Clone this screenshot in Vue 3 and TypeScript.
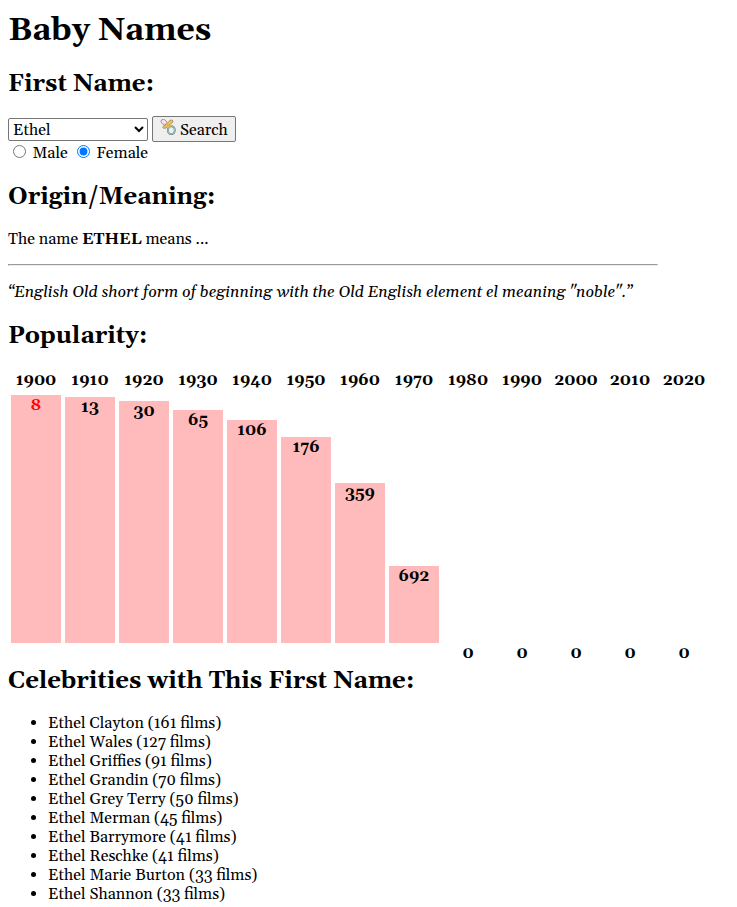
<script setup lang="ts">
import { ref } from 'vue'

interface Decade { year: number; rank: number }
interface Celebrity { name: string; films: number }

const selectedName = ref('Ethel')
const gender = ref('f')

const decades: Decade[] = [
  { year: 1900, rank: 8 },
  { year: 1910, rank: 13 },
  { year: 1920, rank: 30 },
  { year: 1930, rank: 65 },
  { year: 1940, rank: 106 },
  { year: 1950, rank: 176 },
  { year: 1960, rank: 359 },
  { year: 1970, rank: 692 },
  { year: 1980, rank: 0 },
  { year: 1990, rank: 0 },
  { year: 2000, rank: 0 },
  { year: 2010, rank: 0 },
  { year: 2020, rank: 0 },
]

const celebrities: Celebrity[] = [
  { name: 'Ethel Clayton', films: 161 },
  { name: 'Ethel Wales', films: 127 },
  { name: 'Ethel Griffies', films: 91 },
  { name: 'Ethel Grandin', films: 70 },
  { name: 'Ethel Grey Terry', films: 50 },
  { name: 'Ethel Merman', films: 45 },
  { name: 'Ethel Barrymore', films: 41 },
  { name: 'Ethel Reschke', films: 41 },
  { name: 'Ethel Marie Burton', films: 33 },
  { name: 'Ethel Shannon', films: 33 },
]

// A rank of 1 fills the chart; unranked decades have no bar.
const barHeight = (rank: number): number => (rank === 0 ? 0 : Math.floor((1000 - rank) / 4))
</script>

<template>
  <main class="page">
    <h1>Baby Names</h1>

    <h2>First Name:</h2>
    <div class="controls">
      <select v-model="selectedName" class="names">
        <option value="Ethel">Ethel</option>
      </select>
      <button class="search" type="button">
        <svg class="pacifier" viewBox="0 0 16 16" width="16" height="16">
          <ellipse cx="11.3" cy="11.2" rx="3.5" ry="4" fill="none" stroke="#648a80" stroke-width="1.9" />
          <ellipse cx="11.3" cy="11.2" rx="3.5" ry="4" fill="none" stroke="#a5d0dc" stroke-width="0.8" />
          <ellipse cx="3.9" cy="3" rx="3.1" ry="2.3" transform="rotate(40 3.9 3)" fill="#f6e6e8" stroke="#a5888c" stroke-width="0.9" />
          <path d="M11.4 1C13.2 1 13.4 3 12 4.1C10.5 5.2 9 5.6 8.1 6.9C7.1 8.5 5.4 9.6 3.7 9.2C2.3 8.8 2.6 7.4 4 6.9C5.6 6.3 6.2 5.6 7 4.6C8.2 3.4 9.4 1.2 11.4 1Z" fill="#edcb69" stroke="#9b7b38" stroke-width="0.8" />
          <path d="M7.2 5.2L9.6 7.6" stroke="#dcb552" stroke-width="3" stroke-linecap="round" />
        </svg>
        <span class="caption">Search</span>
      </button>
    </div>
    <div class="genders">
      <label><input v-model="gender" type="radio" name="gender" value="m" /><span class="caption">Male</span></label>
      <label><input v-model="gender" type="radio" name="gender" value="f" /><span class="caption">Female</span></label>
    </div>

    <h2>Origin/Meaning:</h2>
    <p>The name <strong>ETHEL</strong> means ...</p>
    <hr />
    <p class="meaning">“English Old short form of beginning with the Old English element el meaning "noble".”</p>

    <h2>Popularity:</h2>
    <div class="chart">
      <div v-for="d in decades" :key="d.year" class="decade">
        <div class="year">{{ d.year }}</div>
        <div class="track">
          <div class="bar" :class="{ top: d.rank > 0 && d.rank <= 10 }" :style="{ height: barHeight(d.rank) + 'px' }">{{ d.rank }}</div>
        </div>
      </div>
    </div>

    <h2 class="celebs">Celebrities with This First Name:</h2>
    <ul>
      <li v-for="c in celebrities" :key="c.name">{{ c.name }} ({{ c.films }} films)</li>
    </ul>
  </main>
</template>

<style>
body {
  background: #fff;
}
</style>

<style scoped>
.page {
  box-sizing: border-box;
  height: 907px;
  overflow: hidden;
  padding: 13px 8px 0;
  color: #000;
  font: 16px/18px Georgia, Gelasio, "Liberation Serif", serif;
}
h1 {
  margin: 0 0 22px;
  font-size: 32px;
  line-height: 36px;
}
h2 {
  margin: 0 0 18px;
  font-size: 24px;
  line-height: 27px;
}
.controls {
  display: flex;
  align-items: center;
  gap: 4px;
  height: 26px;
}
.names {
  box-sizing: border-box;
  width: 140px;
  height: 23px;
  font: inherit;
  color: #000;
  background: #fff;
  border: 1px solid #767676;
  border-radius: 2px;
}
.search {
  box-sizing: border-box;
  display: flex;
  align-items: center;
  gap: 4px;
  width: 84px;
  height: 26px;
  padding: 0 7px;
  border: 1px solid #767676;
  border-radius: 2px;
  background: #efefef;
  font: inherit;
  color: #000;
}
.pacifier {
  flex: none;
  margin-bottom: 4px;
}
.caption {
  padding-top: 2px;
}
.genders {
  display: flex;
  height: 20px;
  margin-bottom: 22px;
}
label {
  display: flex;
  align-items: center;
}
input {
  width: 13px;
  height: 13px;
  margin: 0 6.5px 1px 5px;
}
label + label input {
  margin-left: 9px;
}
p {
  margin: 19px 0 0;
}
hr {
  box-sizing: border-box;
  width: 650px;
  height: 2px;
  margin: 16px 0 17px;
  border: 1px solid;
  border-color: #9a9a9a #eee #eee #9a9a9a;
}
.meaning {
  margin: 0 0 22px;
  font-style: italic;
  white-space: nowrap;
}
.chart {
  display: flex;
  gap: 4px;
  padding-left: 3px;
  margin-top: 21px;
  height: 272px;
}
.decade {
  width: 50px;
  text-align: center;
  font-weight: bold;
}
.year {
  height: 24px;
}
.track {
  display: flex;
  align-items: flex-end;
  height: 248px;
}
.bar {
  width: 50px;
  line-height: 21px;
  background: #ffbbbb;
}
.top {
  color: #f00;
}
.celebs {
  margin-top: 25px;
}
ul {
  margin: 19px 0 0;
  padding-left: 40px;
}
li {
  line-height: 19px;
}
</style>
